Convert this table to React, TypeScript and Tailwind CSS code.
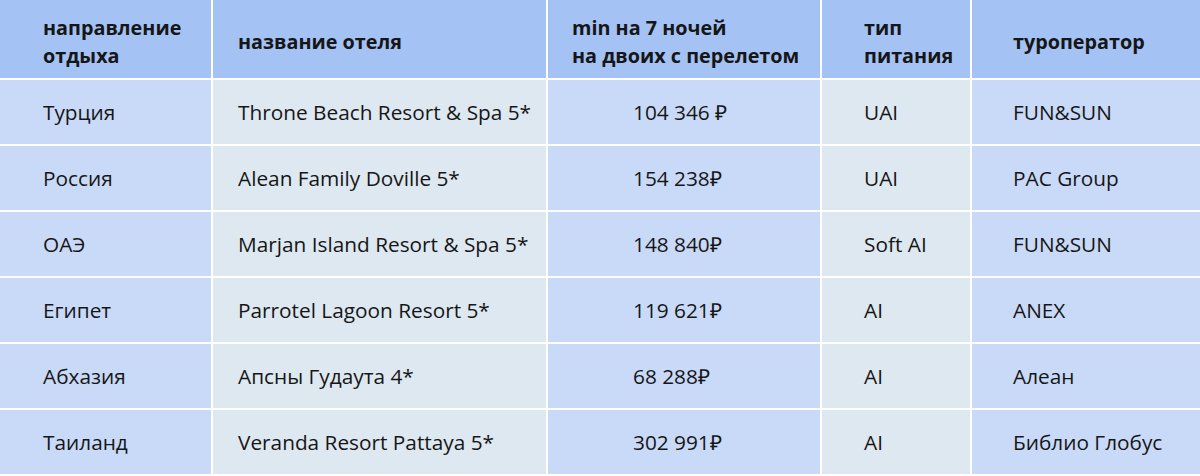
const rows = [
  { country: 'Турция', hotel: 'Throne Beach Resort & Spa 5*', price: '104 346 ₽', food: 'UAI', operator: 'FUN&SUN' },
  { country: 'Россия', hotel: 'Alean Family Doville 5*', price: '154 238₽', food: 'UAI', operator: 'PAC Group' },
  { country: 'ОАЭ', hotel: 'Marjan Island Resort & Spa 5*', price: '148 840₽', food: 'Soft AI', operator: 'FUN&SUN' },
  { country: 'Египет', hotel: 'Parrotel Lagoon Resort 5*', price: '119 621₽', food: 'AI', operator: 'ANEX' },
  { country: 'Абхазия', hotel: 'Апсны Гудаута 4*', price: '68 288₽', food: 'AI', operator: 'Алеан' },
  { country: 'Таиланд', hotel: 'Veranda Resort Pattaya 5*', price: '302 991₽', food: 'AI', operator: 'Библио Глобус' },
];

const dark = 'bg-[#c9daf8]';
const light = 'bg-[#dde8f1]';
const head = 'flex items-center bg-[#a4c2f4] pt-[5px] text-[19.8px] font-bold leading-[28px]';
const cell = 'flex items-center pt-[2px] text-[20.8px]';

export default function App() {
  return (
    <div className="h-[476px] w-[1200px] bg-white font-['Open_Sans',sans-serif] text-[#161616]">
      <div className="grid grid-cols-[211px_333px_272px_148px_228px] grid-rows-[78px_repeat(6,64px)] gap-[2px] bg-white">
        <div className={`${head} pl-[43px]`}>
          направление
          <br />
          отдыха
        </div>
        <div className={`${head} pl-[25px]`}>название отеля</div>
        <div className={`${head} pl-[24px]`}>
          min на 7 ночей
          <br />
          на двоих с перелетом
        </div>
        <div className={`${head} pl-[42px]`}>
          тип
          <br />
          питания
        </div>
        <div className={`${head} pl-[41px]`}>туроператор</div>
        {rows.map((r) => (
          <>
            <div key={r.country + 'a'} className={`${cell} ${dark} pl-[43px]`}>{r.country}</div>
            <div key={r.country + 'b'} className={`${cell} ${light} pl-[25px]`}>{r.hotel}</div>
            <div key={r.country + 'c'} className={`${cell} ${dark} pl-[85px]`}>{r.price}</div>
            <div key={r.country + 'd'} className={`${cell} ${light} pl-[42px]`}>{r.food}</div>
            <div key={r.country + 'e'} className={`${cell} ${dark} pl-[41px]`}>{r.operator}</div>
          </>
        ))}
      </div>
    </div>
  );
}
